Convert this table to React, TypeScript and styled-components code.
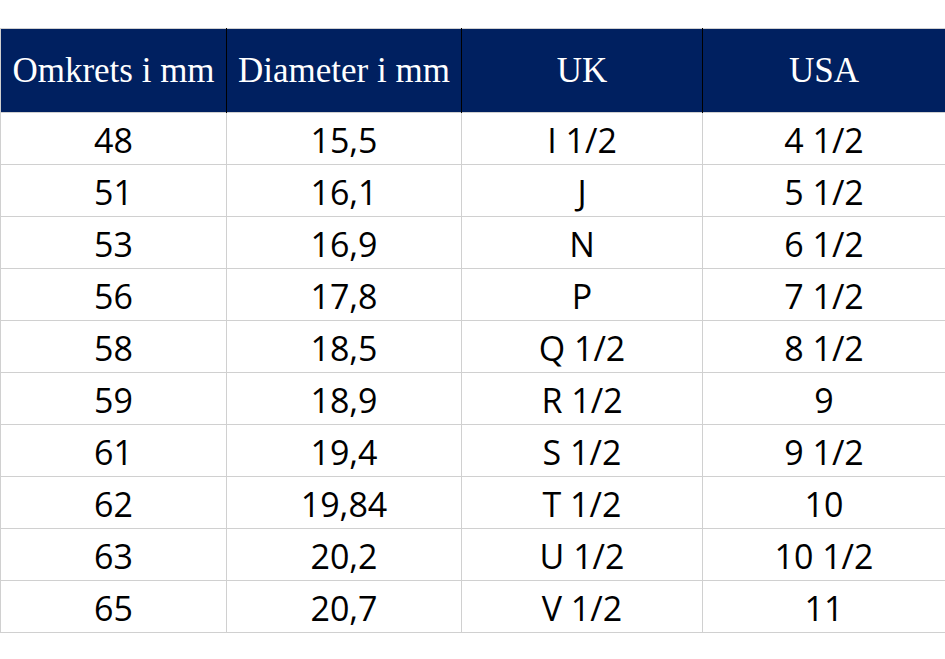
import React from "react";
import styled, { createGlobalStyle } from "styled-components";

const GlobalStyle = createGlobalStyle`
  body {
    margin: 0;
    background: #ffffff;
  }
`;

const Page = styled.div`
  padding-top: 28px;
`;

const Table = styled.table`
  width: 945px;
  border-collapse: collapse;
  table-layout: fixed;
`;

const HeadCell = styled.th`
  height: 83px;
  padding: 0;
  background: #002060;
  color: #ffffff;
  font-family: "Liberation Serif", "Times New Roman", serif;
  font-size: 35px;
  font-weight: normal;
  text-align: center;
  white-space: nowrap;
  border-top: 1px solid #d0d0d0;
  border-left: 1px solid #000000;
  border-right: 1px solid #000000;
  &:first-child {
    border-left-color: #d0d0d0;
  }
  &:last-child {
    border-right-color: #d0d0d0;
  }
`;

const Cell = styled.td`
  height: 49px;
  padding: 2px 0 0;
  border: 1px solid #d0d0d0;
  text-align: center;
  font-family: "Open Sans", "Liberation Sans", sans-serif;
  font-size: 34px;
  color: #000000;
  line-height: 1;
`;

const columns = [
  { title: "Omkrets i mm", width: 226 },
  { title: "Diameter i mm", width: 235 },
  { title: "UK", width: 241 },
  { title: "USA", width: 243 },
];

const sizes = [
  ["48", "15,5", "I 1/2", "4 1/2"],
  ["51", "16,1", "J", "5 1/2"],
  ["53", "16,9", "N", "6 1/2"],
  ["56", "17,8", "P", "7 1/2"],
  ["58", "18,5", "Q 1/2", "8 1/2"],
  ["59", "18,9", "R 1/2", "9"],
  ["61", "19,4", "S 1/2", "9 1/2"],
  ["62", "19,84", "T 1/2", "10"],
  ["63", "20,2", "U 1/2", "10 1/2"],
  ["65", "20,7", "V 1/2", "11"],
];

export default function App() {
  return (
    <>
      <GlobalStyle />
      <Page>
        <Table>
          <colgroup>
            {columns.map((c) => (
              <col key={c.title} style={{ width: c.width }} />
            ))}
          </colgroup>
          <thead>
            <tr>
              {columns.map((c) => (
                <HeadCell key={c.title}>{c.title}</HeadCell>
              ))}
            </tr>
          </thead>
          <tbody>
            {sizes.map((row) => (
              <tr key={row[0]}>
                {row.map((v, i) => (
                  <Cell key={i}>{v}</Cell>
                ))}
              </tr>
            ))}
          </tbody>
        </Table>
      </Page>
    </>
  );
}
